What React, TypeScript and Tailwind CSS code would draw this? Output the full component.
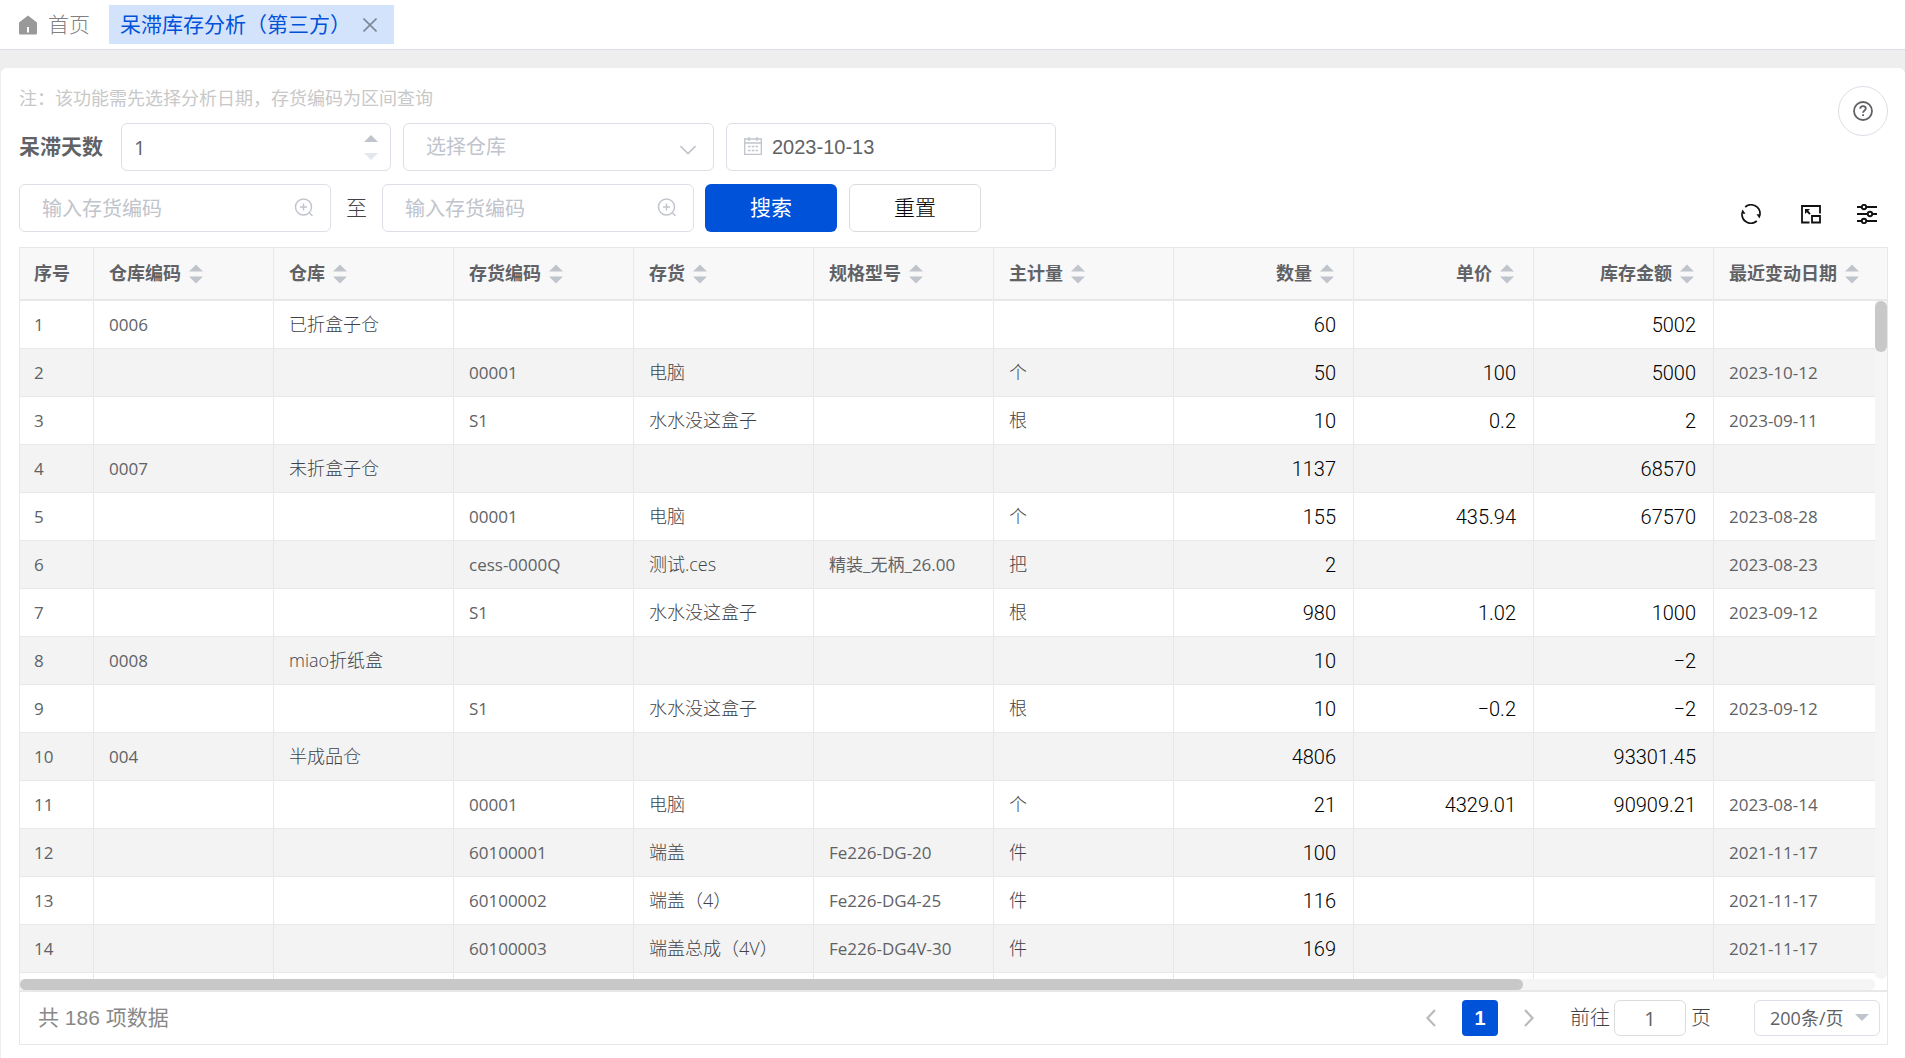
import React from 'react';
import clsx from 'clsx';

type Row = {
  whCode?: string;
  wh?: string;
  code?: string;
  name?: string;
  spec?: string;
  unit?: string;
  qty?: string;
  price?: string;
  amount?: string;
  date?: string;
};

const columns: { key: keyof Row; title: string; align?: 'right'; small?: boolean }[] = [
  { key: 'whCode', title: '仓库编码', small: true },
  { key: 'wh', title: '仓库' },
  { key: 'code', title: '存货编码', small: true },
  { key: 'name', title: '存货' },
  { key: 'spec', title: '规格型号', small: true },
  { key: 'unit', title: '主计量' },
  { key: 'qty', title: '数量', align: 'right' },
  { key: 'price', title: '单价', align: 'right' },
  { key: 'amount', title: '库存金额', align: 'right' },
  { key: 'date', title: '最近变动日期', small: true },
];

const rows: Row[] = [
  { whCode: '0006', wh: '已折盒子仓', qty: '60', amount: '5002' },
  { code: '00001', name: '电脑', unit: '个', qty: '50', price: '100', amount: '5000', date: '2023-10-12' },
  { code: 'S1', name: '水水没这盒子', unit: '根', qty: '10', price: '0.2', amount: '2', date: '2023-09-11' },
  { whCode: '0007', wh: '未折盒子仓', qty: '1137', amount: '68570' },
  { code: '00001', name: '电脑', unit: '个', qty: '155', price: '435.94', amount: '67570', date: '2023-08-28' },
  { code: 'cess-0000Q', name: '测试.ces', spec: '精装_无柄_26.00', unit: '把', qty: '2', date: '2023-08-23' },
  { code: 'S1', name: '水水没这盒子', unit: '根', qty: '980', price: '1.02', amount: '1000', date: '2023-09-12' },
  { whCode: '0008', wh: 'miao折纸盒', qty: '10', amount: '−2' },
  { code: 'S1', name: '水水没这盒子', unit: '根', qty: '10', price: '−0.2', amount: '−2', date: '2023-09-12' },
  { whCode: '004', wh: '半成品仓', qty: '4806', amount: '93301.45' },
  { code: '00001', name: '电脑', unit: '个', qty: '21', price: '4329.01', amount: '90909.21', date: '2023-08-14' },
  { code: '60100001', name: '端盖', spec: 'Fe226-DG-20', unit: '件', qty: '100', date: '2021-11-17' },
  { code: '60100002', name: '端盖（4）', spec: 'Fe226-DG4-25', unit: '件', qty: '116', date: '2021-11-17' },
  { code: '60100003', name: '端盖总成（4V）', spec: 'Fe226-DG4V-30', unit: '件', qty: '169', date: '2021-11-17' },
];

const field = 'h-12 rounded-md border border-[#dcdfe6] bg-white text-[20px] text-[#606266] placeholder:text-[#c0c4cc] outline-none';

function SortCaret() {
  return (
    <svg width="14" height="20" viewBox="0 0 14 20" fill="#c0c4cc" className="shrink-0" aria-hidden="true">
      <path d="M0 7.500 7 0.500l7 7zM0 12.500h14l-7 7z" />
    </svg>
  );
}

function ZoomInIcon() {
  return (
    <svg width="20" height="20" viewBox="0 0 20 20" fill="none" stroke="#c0c4cc" strokeWidth="1.4" className="pointer-events-none absolute right-[17px] top-[14px]" aria-hidden="true">
      <circle cx="9.5" cy="9" r="8" />
      <path d="M6 9h7M9.5 5.500v7M15 14.500l3.500 3.500" />
    </svg>
  );
}

function CodeInput({ label }: { label: string }) {
  return (
    <div className="relative w-[312px]">
      <input type="text" aria-label={label} placeholder="输入存货编码" className={clsx(field, 'w-full pl-[22px] pr-12')} />
      <ZoomInIcon />
    </div>
  );
}

function TabBar() {
  return (
    <nav className="flex h-[50px] shrink-0 items-start border-b border-[#dcdfe6] bg-white pl-[18px] pt-[5px] text-[21px]">
      <a href="#" className="flex h-[39px] items-center font-light text-[#808080]">
        <svg width="20" height="20" viewBox="0 0 20 20" fill="#999" className="mr-[10px]" aria-hidden="true">
          <path fillRule="evenodd" d="M10 0.500 19 7.500V18a1.500 1.500 0 0 1-1.500 1.500h-15A1.500 1.500 0 0 1 1 18V7.500zM9 12v5.500h2V12z" />
        </svg>
        首页
      </a>
      <div className="ml-[19px] flex h-[39px] w-[285px] items-center justify-between bg-[#d4e3fc] pl-[11px] pr-[17px] text-[#0052d9]">
        <a href="#">呆滞库存分析（第三方）</a>
        <button type="button" aria-label="关闭">
          <svg width="14" height="14" viewBox="0 0 14 14" stroke="#7d8797" strokeWidth="1.600" aria-hidden="true">
            <path d="M.5.5l13 13M13.500.5l-13 13" />
          </svg>
        </button>
      </div>
    </nav>
  );
}

function Filters() {
  return (
    <form className="flex flex-col">
      <p className="text-[18px] leading-6 text-[#c8c8c8]">注：该功能需先选择分析日期，存货编码为区间查询</p>
      <div className="mt-[13px] flex items-center">
        <label htmlFor="days" className="mr-[18px] text-[21px] font-bold text-[#606266]">呆滞天数</label>
        <div className="relative w-[270px]">
          <input
            id="days"
            type="number"
            defaultValue={1}
            className={clsx(field, 'w-full pl-3 [appearance:textfield] [&::-webkit-inner-spin-button]:appearance-none')}
          />
          <svg width="14" height="26" viewBox="0 0 14 26" className="pointer-events-none absolute right-[13px] top-3" aria-hidden="true">
            <path d="M0 7 7 0l7 7z" fill="#c0c4cc" />
            <path d="M0 18h14l-7 7z" fill="#e4e7ed" />
          </svg>
        </div>
        <div className="relative ml-3 w-[311px]">
          <select aria-label="选择仓库" className={clsx(field, 'w-full appearance-none pl-[22px] text-[#c0c4cc]')}>
            <option>选择仓库</option>
          </select>
          <svg width="16" height="10" viewBox="0 0 16 10" fill="none" stroke="#c0c4cc" strokeWidth="1.600" className="pointer-events-none absolute right-[18px] top-[22px]" aria-hidden="true">
            <path d="M.5 1 8 8.500 15.500 1" />
          </svg>
        </div>
        <div className="relative ml-3 w-[330px]">
          <input
            type="text"
            aria-label="分析日期"
            defaultValue="2023-10-13"
            className={clsx(field, "w-full pl-[45px] font-['Liberation_Sans',sans-serif]")}
          />
          <svg width="18" height="18" viewBox="0 0 18 18" fill="none" stroke="#c0c4cc" strokeWidth="1.300" className="pointer-events-none absolute left-[18px] top-[14px]" aria-hidden="true">
            <path d="M.7 2h16.600v15.300H.7zM.7 6h16.600M5 0v4M13 0v4" />
            <path d="M4 9.500h10M4 13.500h10" strokeDasharray="2.500 1.300" />
          </svg>
        </div>
      </div>
      <div className="mt-[13px] flex items-center">
        <CodeInput label="起始存货编码" />
        <span className="mx-[15px] text-[21px] font-light text-[#404246]">至</span>
        <CodeInput label="截止存货编码" />
        <button type="button" className="ml-[11px] h-12 w-33 rounded-md bg-[#0052d9] text-[21px] text-white">搜索</button>
        <button type="button" className="ml-3 h-12 w-33 rounded-md border border-[#dcdcdc] bg-white text-[21px] font-light text-black">重置</button>
      </div>
    </form>
  );
}

function Tools() {
  return (
    <div className="flex flex-col items-end justify-between">
      <button type="button" aria-label="帮助" className="flex size-[50px] items-center justify-center rounded-full border border-[#dcdfe6]">
        <svg width="20" height="20" viewBox="0 0 20 20" fill="none" stroke="#606266" strokeWidth="1.800" aria-hidden="true">
          <circle cx="10" cy="10" r="9" />
          <path d="M7.200 7.800c0-1.700 1.200-2.600 2.800-2.600s2.800 1 2.800 2.400c0 1.900-2.700 1.900-2.700 4.200M10.100 13.200v1.900" />
        </svg>
      </button>
      <div className="flex items-center pb-2 pr-[11px] text-[#111]">
        <button type="button" aria-label="刷新">
          <svg width="20" height="20" viewBox="0 0 20 20" fill="none" stroke="currentColor" strokeWidth="1.700" aria-hidden="true">
            <path d="M4.200 3A9 9 0 0 1 19 10.500M15.800 17A9 9 0 0 1 1 9.500" />
            <path d="M15.500 10.200h4.500l-1.500 4.200zM4.500 9.800H0l1.500-4.200z" fill="currentColor" stroke="none" />
          </svg>
        </button>
        <button type="button" aria-label="窗口" className="ml-10">
          <svg width="20" height="20" viewBox="0 0 20 20" fill="none" stroke="currentColor" strokeWidth="1.800" aria-hidden="true">
            <path d="M8.500 18.500H1V2h18v7.500" />
            <path d="M11 12h8v6.500h-8zM5 6l4 4" />
            <path d="M4 5h5L4 10z" fill="currentColor" stroke="none" />
          </svg>
        </button>
        <button type="button" aria-label="列设置" className="ml-9">
          <svg width="20" height="20" viewBox="0 0 20 20" fill="none" stroke="currentColor" strokeWidth="1.900" aria-hidden="true">
            <path d="M0 3h4.500M9.500 3H20M0 10h10.500M15.500 10H20M0 17h4.500M9.500 17H20" />
            <circle cx="7" cy="3" r="2.200" />
            <circle cx="13" cy="10" r="2.200" />
            <circle cx="7" cy="17" r="2.200" />
          </svg>
        </button>
      </div>
    </div>
  );
}

function StockTable() {
  return (
    <div className="relative min-h-0 flex-1 overflow-hidden">
      <table className="w-full table-fixed border-separate border-spacing-0 text-[18px] text-[#606266]">
        <colgroup>
          <col className="w-[74px]" />
          {columns.map(c => (
            <col key={c.key} className={c.key === 'date' ? 'w-auto' : 'w-[180px]'} />
          ))}
        </colgroup>
        <thead>
          <tr className="bg-[#f8f8f8]">
            <th className="h-[53px] border-b-2 border-r border-[#e8e8e8] pl-[14px] text-left font-bold">序号</th>
            {columns.map(c => (
              <th key={c.key} className="h-[53px] border-b-2 border-r border-[#e8e8e8] pl-[15px] pr-[19px] font-bold last:border-r-0">
                <div className={clsx('flex items-center gap-2 whitespace-nowrap', c.align === 'right' && 'justify-end')}>
                  {c.title}
                  <SortCaret />
                </div>
              </th>
            ))}
          </tr>
        </thead>
        <tbody>
          {rows.map((row, i) => (
            <tr key={i} className="even:bg-[#f3f3f3]">
              <td className="h-12 border-b border-r border-[#e8e8e8] pl-[14px] text-[17px]">{i + 1}</td>
              {columns.map(c => (
                <td
                  key={c.key}
                  className={clsx(
                    'h-12 whitespace-nowrap border-b border-r border-[#e8e8e8] last:border-r-0',
                    c.align === 'right' ? 'pr-[17px] text-right font-[Roboto] text-[20px] text-black' : 'pl-[15px]',
                    c.small ? 'text-[17px]' : 'font-light',
                    !c.small && !c.align && 'text-[#404246]'
                  )}
                >
                  {row[c.key]}
                </td>
              ))}
            </tr>
          ))}
          <tr>
            <td className="h-12 border-r border-[#e8e8e8]" />
            {columns.map(c => (
              <td key={c.key} className="h-12 border-r border-[#e8e8e8] last:border-r-0" />
            ))}
          </tr>
        </tbody>
      </table>
      {/* vertical scrollbar */}
      <div className="absolute bottom-0 right-0 top-[53px] w-3 rounded-b-md bg-[#f5f5f5]">
        <div className="h-[51px] rounded-md bg-[#c8c8c8]" />
      </div>
    </div>
  );
}

function Pager() {
  return (
    <div className="flex h-[54px] shrink-0 items-center border-t-2 border-[#e8e8e8] pl-[18px] pr-[7px] text-[20px] text-[#606266]">
      <span className="font-['Liberation_Sans','Noto_Sans_CJK_SC',sans-serif] text-[21px] text-[#888]">共 186 项数据</span>
      <button type="button" aria-label="上一页" className="ml-auto">
        <svg width="10" height="18" viewBox="0 0 10 18" fill="none" stroke="#bbb" strokeWidth="2.200" aria-hidden="true">
          <path d="M9 1 1.500 9 9 17" />
        </svg>
      </button>
      <button type="button" className="ml-[26px] size-9 rounded bg-[#0052d9] font-['Liberation_Sans',sans-serif] font-bold text-white">1</button>
      <button type="button" aria-label="下一页" className="ml-[26px]">
        <svg width="10" height="18" viewBox="0 0 10 18" fill="none" stroke="#bbb" strokeWidth="2.200" aria-hidden="true">
          <path d="M1 1l7.500 8L1 17" />
        </svg>
      </button>
      <label htmlFor="page" className="ml-9 font-light text-[#404246]">前往</label>
      <input id="page" type="text" defaultValue="1" className="ml-1 h-9 w-[72px] rounded-md border border-[#dcdcdc] text-center outline-none" />
      <span className="ml-[5px] font-light text-[#404246]">页</span>
      <div className="relative ml-[43px] w-[126px]">
        <select aria-label="每页条数" className="block h-9 w-full appearance-none rounded-md border border-[#dcdfe6] bg-white pl-[15px] text-[18px] outline-none">
          <option>200条/页</option>
        </select>
        <svg width="14" height="7" viewBox="0 0 14 7" className="pointer-events-none absolute right-[11px] top-[14px]" aria-hidden="true">
          <path d="M0 0h14L7 7z" fill="#c0c4cc" />
        </svg>
      </div>
    </div>
  );
}

export default function App() {
  return (
    <div className="flex h-screen flex-col bg-[#eee] font-['Open_Sans','Noto_Sans_CJK_SC',sans-serif]">
      <TabBar />
      <main className="ml-px mt-[18px] flex min-h-0 flex-1 flex-col rounded-t-md bg-white px-[18px] pb-[13px] pr-[17px] pt-[18px]">
        <div className="flex justify-between">
          <Filters />
          <Tools />
        </div>
        <section className="mt-[15px] flex min-h-0 flex-1 flex-col border border-[#e8e8e8]">
          <StockTable />
          <div className="mr-3 h-[11px] shrink-0 rounded-r-md bg-[#f5f5f5]">
            <div className="h-full w-[81%] rounded-md bg-[#c8c8c8]" />
          </div>
          <Pager />
        </section>
      </main>
    </div>
  );
}
